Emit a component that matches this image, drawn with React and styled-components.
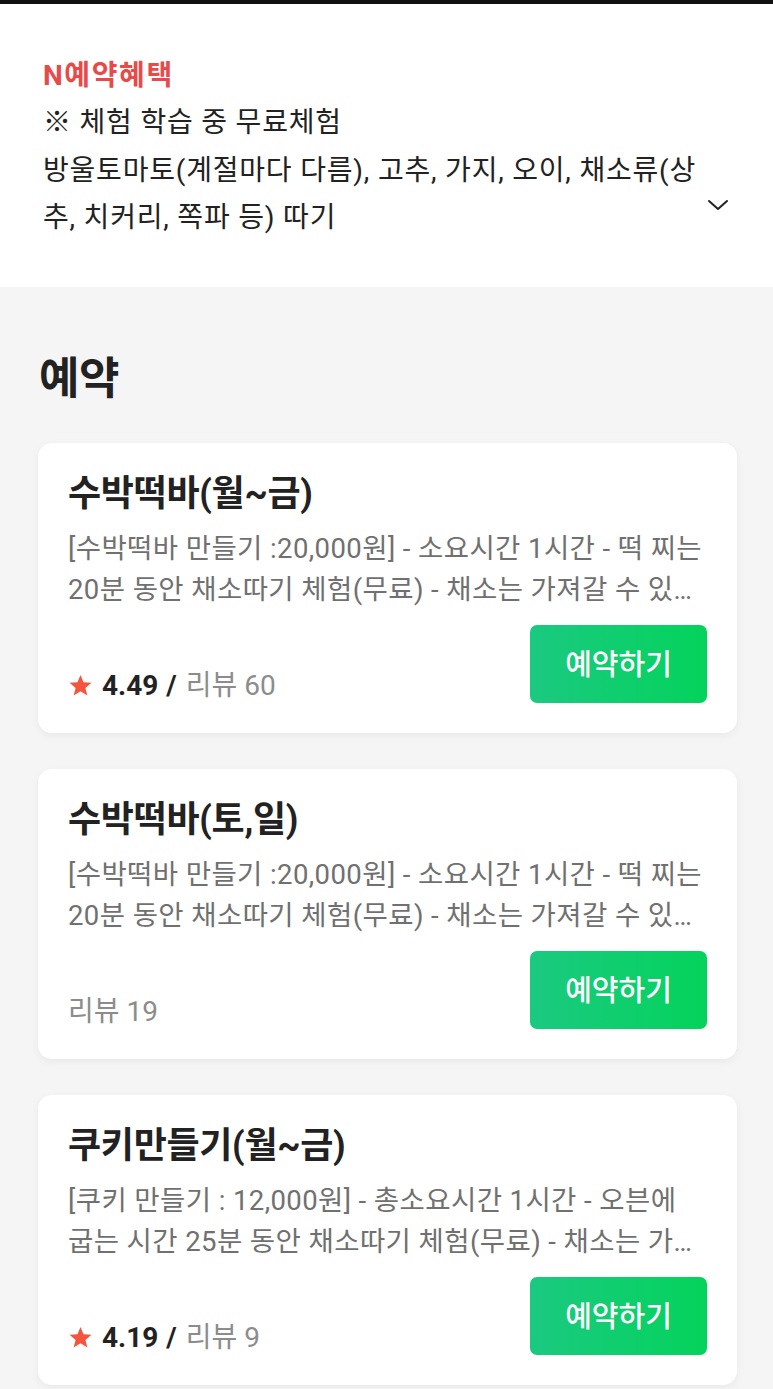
import React from "react";
import styled, { createGlobalStyle } from "styled-components";

const GlobalStyle = createGlobalStyle`
  html, body { margin: 0; padding: 0; }
  body {
    background: #f5f5f5;
    font-family: Roboto, "Noto Sans CJK KR", "Noto Sans", sans-serif;
    color: #222;
    -webkit-font-smoothing: antialiased;
  }
  * { box-sizing: border-box; }
`;

const Page = styled.div`
  display: flex;
  flex-direction: column;
  min-height: 1389px;
  overflow: hidden;
`;

const StatusEdge = styled.div`
  height: 4px;
  background: #111;
`;

const Benefit = styled.section`
  position: relative;
  background: #fff;
  padding: 54px 55px 45px 43px;
`;

const BenefitTitle = styled.h3`
  margin: 0 0 6px;
  font-size: 28px;
  line-height: 35px;
  font-weight: 700;
  color: #e84a4a;
  letter-spacing: 1.6px;
`;

const BenefitText = styled.p`
  margin: 0;
  font-size: 28px;
  line-height: 47.5px;
  color: #222;
  letter-spacing: 0.8px;
  word-break: break-all;
`;

const Chevron = styled.button`
  position: absolute;
  right: 43px;
  top: 190px;
  width: 24px;
  height: 22px;
  padding: 0;
  border: 0;
  background: none;
  display: flex;
  align-items: center;
  justify-content: center;
  color: #222;
`;

const Reserve = styled.section`
  padding: 68px 36px 40px 38px;
  display: flex;
  flex-direction: column;
  gap: 36px;
`;

const SectionTitle = styled.h2`
  margin: 0 0 3px 1px;
  font-size: 44px;
  line-height: 49px;
  font-weight: 700;
  color: #222;
  letter-spacing: -0.5px;
`;

const Card = styled.article`
  background: #fff;
  border-radius: 14px;
  box-shadow: 0 3px 10px rgba(0, 0, 0, 0.05);
  padding: 29px 30px 30px 30px;
  display: flex;
  flex-direction: column;
`;

const CardTitle = styled.h4`
  margin: 0;
  font-size: 36px;
  line-height: 44px;
  font-weight: 700;
  color: #222;
  letter-spacing: -0.3px;
`;

const CardDesc = styled.p`
  margin: 12px 0 0;
  font-size: 27.5px;
  line-height: 41px;
  color: #707070;
  letter-spacing: 0.4px;
  word-break: normal;
  display: -webkit-box;
  -webkit-line-clamp: 2;
  -webkit-box-orient: vertical;
  overflow: hidden;
`;

const CardFoot = styled.div`
  margin-top: 15px;
  display: flex;
  justify-content: space-between;
  align-items: flex-end;
`;

const Rating = styled.div`
  display: flex;
  align-items: center;
  font-size: 28px;
  line-height: 34px;
  letter-spacing: 0;
`;

const Star = styled.svg`
  width: 25px;
  height: 25px;
  margin-right: 9px;
  flex: none;
`;

const Score = styled.span`
  font-weight: 700;
  color: #222;
`;

const Slash = styled.span`
  font-weight: 700;
  color: #222;
  margin: 0 9px 0 8px;
`;

const Reviews = styled.span`
  color: #8c8c8c;
`;

const BookButton = styled.button`
  width: 177px;
  height: 78px;
  border: 0;
  border-radius: 7px;
  background: linear-gradient(90deg, #1bc981 0%, #04d35b 100%);
  color: #fff;
  font-family: inherit;
  font-size: 29px;
  font-weight: 500;
  letter-spacing: 0;
  display: flex;
  align-items: center;
  justify-content: center;
  flex: none;
  padding: 0 0 4px;
`;

const items = [
  {
    title: "수박떡바(월~금)",
    desc:
      "[수박떡바 만들기 :20,000원] - 소요시간 1시간 - 떡 찌는 20분 동안 채소따기 체험(무료) - 채소는 가져갈 수 있습니다.",
    score: "4.49",
    reviews: 60,
  },
  {
    title: "수박떡바(토,일)",
    desc:
      "[수박떡바 만들기 :20,000원] - 소요시간 1시간 - 떡 찌는 20분 동안 채소따기 체험(무료) - 채소는 가져갈 수 있습니다.",
    score: null,
    reviews: 19,
  },
  {
    title: "쿠키만들기(월~금)",
    desc:
      "[쿠키 만들기 : 12,000원] - 총소요시간 1시간 - 오븐에 굽는 시간 25분 동안 채소따기 체험(무료) - 채소는 가져갈 수 있습니다.",
    score: "4.19",
    reviews: 9,
  },
];

function StarIcon() {
  return (
    <Star viewBox="0 0 24 24" aria-hidden="true">
      <path
        d="M12 1.8l2.9 7.1 7.6.5-5.8 4.9 1.9 7.4L12 17.6l-6.6 4.1 1.9-7.4-5.8-4.9 7.6-.5z"
        fill="#f4553c"
      />
    </Star>
  );
}

export default function App() {
  return (
    <>
      <GlobalStyle />
      <Page>
        <StatusEdge />
        <Benefit>
          <BenefitTitle>N예약혜택</BenefitTitle>
          <BenefitText>※ 체험 학습 중 무료체험</BenefitText>
          <BenefitText>
            방울토마토(계절마다 다름), 고추, 가지, 오이, 채소류(상추, 치커리, 쪽파 등) 따기
          </BenefitText>
          <Chevron aria-label="더보기">
            <svg width="22" height="14" viewBox="0 0 22 14" fill="none">
              <path d="M2 3l9 8 9-8" stroke="#222" strokeWidth="2" strokeLinecap="round" strokeLinejoin="round" />
            </svg>
          </Chevron>
        </Benefit>
        <Reserve>
          <SectionTitle>예약</SectionTitle>
          {items.map((it) => (
            <Card key={it.title}>
              <CardTitle>{it.title}</CardTitle>
              <CardDesc>{it.desc}</CardDesc>
              <CardFoot>
                <Rating>
                  {it.score && (
                    <>
                      <StarIcon />
                      <Score>{it.score}</Score>
                      <Slash>/</Slash>
                    </>
                  )}
                  <Reviews>리뷰 {it.reviews}</Reviews>
                </Rating>
                <BookButton>예약하기</BookButton>
              </CardFoot>
            </Card>
          ))}
        </Reserve>
      </Page>
    </>
  );
}
